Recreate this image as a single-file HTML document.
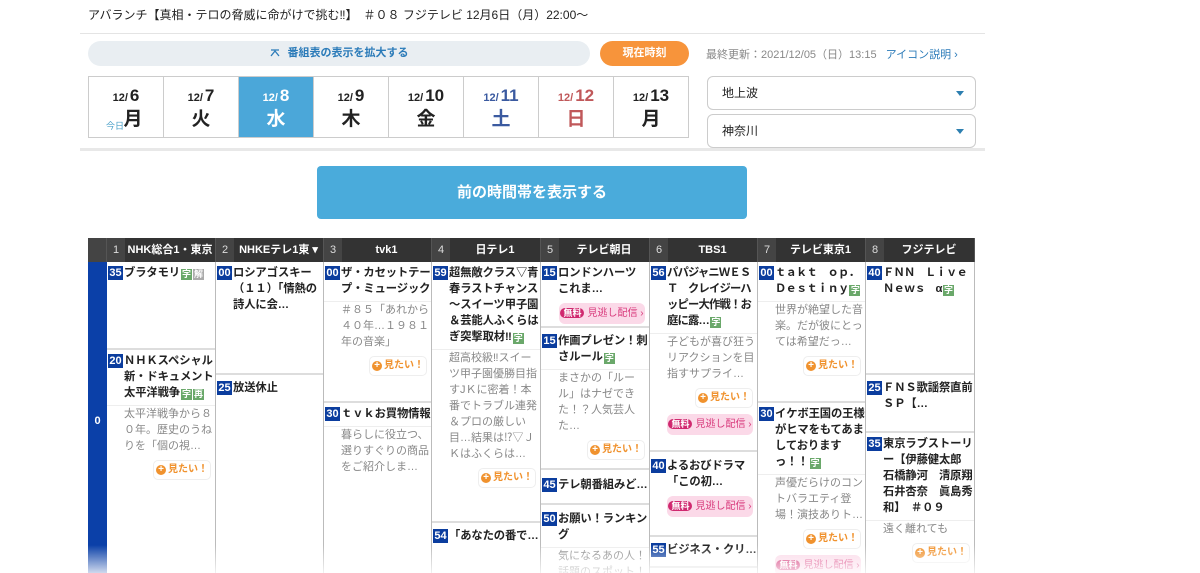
<!DOCTYPE html>
<html><head><meta charset="utf-8"><style>
*{box-sizing:border-box;margin:0;padding:0}
html,body{width:1200px;height:573px;overflow:hidden}
body{background:#fff;font-family:"Liberation Sans","Noto Sans CJK JP",sans-serif;color:#222;position:relative}
.a{position:absolute}
.title{left:88px;top:6px;font-size:12px;color:#222}
.hr1{left:80px;top:33px;width:905px;height:1px;background:#e4e4e4}
.pill{left:88px;top:41px;width:502px;height:25px;border-radius:13px;background:#e9eef2;color:#2b7bb9;font-size:11px;font-weight:bold;text-align:center;line-height:25px}
.pill svg{vertical-align:-1px;margin-right:8px}
.now{left:600px;top:41px;width:89px;height:25px;border-radius:13px;background:#f7943b;color:#fff;font-size:11px;font-weight:bold;text-align:center;line-height:25px}
.upd{left:706px;top:46px;font-size:11px;color:#888}
.upd b{font-weight:normal;color:#2b7bb9;margin-left:6px}
.tabs{left:88px;top:76px;width:601px;height:62px;border:1px solid #ccc;display:flex}
.tab{flex:1;border-right:1px solid #ccc;text-align:center;font-weight:bold;color:#222;position:relative}
.tab:last-child{border-right:none}
.tab .d{margin-top:9px;font-size:17px;line-height:20px}
.tab .d small{font-size:11px;margin-right:2px}
.tab .w{font-size:19px;line-height:24px}
.tab.sel{background:#4ba7d9;color:#fff}
.tab.sat{color:#3b5aa0}.tab.sun{color:#c0585a}
.today{position:absolute;left:17px;top:42px;font-size:9px;color:#4aa0c8;font-weight:normal}
.tab.first .w{padding-left:14px}
.sel2{left:707px;width:269px;height:34px;border:1px solid #ccc;border-radius:6px;font-size:12px;padding-left:14px;line-height:32px}
.sel2:after{content:"";position:absolute;right:11px;top:14px;border-left:4px solid transparent;border-right:4px solid transparent;border-top:5px solid #2d7fb0}
.hr2{left:80px;top:148px;width:905px;height:3px;background:#e8e8e8}
.prev{left:317px;top:166px;width:430px;height:53px;border-radius:4px;background:#4aabdb;color:#fff;font-size:15px;font-weight:bold;text-align:center;line-height:53px}
.hd{top:238px;height:24px;background:#333;color:#fff;font-size:11px;font-weight:bold;line-height:24px;text-align:center;border-right:1px solid #555;padding-left:18px;white-space:nowrap;overflow:hidden}
.hd .n{position:absolute;left:0;top:0;width:18px;height:24px;background:#444;font-weight:normal;color:#ddd}
.tc{left:88px;top:262px;width:19px;height:311px;background:#0b40a8;color:#fff;font-weight:bold;font-size:11px;text-align:center}
.col{top:262px;height:311px;border-right:1px solid #bbb;overflow:hidden}
.p{position:absolute;left:0;width:100%;border-bottom:2px solid #ddd;overflow:hidden;background:#fff}
.p.l{border-bottom:none}
.t{position:relative;padding-left:17px;padding-right:0;font-size:11.3px;font-weight:bold;line-height:16px;margin-top:3px;letter-spacing:-0.1px}
.t.w{letter-spacing:-0.8px}
.t i{position:absolute;left:1px;top:1px;width:15px;height:14px;background:#0b3d9e;color:#fff;font-style:normal;font-size:11px;line-height:14px;text-align:center;letter-spacing:0}
.t u{text-decoration:none;display:inline-block;width:11px;height:11px;background:#6aa86a;color:#fff;font-size:9px;line-height:11px;text-align:center;vertical-align:-1px;margin-left:1px}
.t u.g{background:#aaa}
.ds{padding-left:17px;padding-right:0;font-size:11px;color:#888;line-height:16px;margin-top:4px;border-top:1px solid #eee}
.mt{display:block;margin:6px 4px 0 auto;width:58px;height:20px;border:1px solid #eee;border-radius:5px;color:#f0922e;font-size:10px;font-weight:bold;line-height:18px;text-align:center}
.mt:before{content:"+";display:inline-block;width:10px;height:10px;border-radius:5px;background:#f0922e;color:#fff;font-size:10px;line-height:10px;margin-right:2px}
.mi{display:block;margin:6px 4px 0 auto;width:86px;height:21px;border-radius:6px;background:#fbd9e8;color:#d83a7c;font-size:10px;line-height:21px;text-align:center}
.mi b{background:#d0296f;color:#fff;border-radius:7px;padding:0 3px;font-size:9px;margin-right:3px}
.fade{left:0;top:545px;width:1200px;height:28px;background:linear-gradient(rgba(255,255,255,0),rgba(255,255,255,.8))}
</style></head><body>
<div class="a title">アバランチ【真相・テロの脅威に命がけで挑む‼】　＃０８ フジテレビ 12月6日（月）22:00～</div>
<div class="a hr1"></div>
<div class="a pill"><svg width="10" height="8" viewBox="0 0 10 8"><path d="M1 7L5 2L9 7M1 1H9" stroke="#2b7bb9" stroke-width="1.3" fill="none"/></svg>番組表の表示を拡大する</div>
<div class="a now">現在時刻</div>
<div class="a upd">最終更新：2021/12/05（日）13:15 <b>アイコン説明 ›</b></div>
<div class="a tabs">
<div class="tab first"><div class="d"><small>12/</small>6</div><div class="w">月</div><span class="today">今日</span></div>
<div class="tab"><div class="d"><small>12/</small>7</div><div class="w">火</div></div>
<div class="tab sel"><div class="d"><small>12/</small>8</div><div class="w">水</div></div>
<div class="tab"><div class="d"><small>12/</small>9</div><div class="w">木</div></div>
<div class="tab"><div class="d"><small>12/</small>10</div><div class="w">金</div></div>
<div class="tab sat"><div class="d"><small>12/</small>11</div><div class="w">土</div></div>
<div class="tab sun"><div class="d"><small>12/</small>12</div><div class="w">日</div></div>
<div class="tab"><div class="d"><small>12/</small>13</div><div class="w">月</div></div>
</div>
<div class="a sel2" style="top:76px">地上波</div>
<div class="a sel2" style="top:114px">神奈川</div>
<div class="a hr2"></div>
<div class="a prev">前の時間帯を表示する</div>

<div class="a hd" style="left:88px;width:19px;background:#444;padding:0"></div>
<div class="a hd" style="left:107px;width:109px"><span class="n">1</span>NHK総合1・東京</div>
<div class="a hd" style="left:216px;width:108px"><span class="n">2</span>NHKEテレ1東 ▾</div>
<div class="a hd" style="left:324px;width:108px"><span class="n">3</span>tvk1</div>
<div class="a hd" style="left:432px;width:109px"><span class="n">4</span>日テレ1</div>
<div class="a hd" style="left:541px;width:109px"><span class="n">5</span>テレビ朝日</div>
<div class="a hd" style="left:650px;width:108px"><span class="n">6</span>TBS1</div>
<div class="a hd" style="left:758px;width:108px"><span class="n">7</span>テレビ東京1</div>
<div class="a hd" style="left:866px;width:109px"><span class="n">8</span>フジテレビ</div>

<div class="a tc"><div style="margin-top:153px">0</div></div>

<div class="a col" style="left:107px;width:109px">
<div class="p" style="top:0;height:88px"><div class="t"><i>35</i>ブラタモリ<u>字</u><u class="g">解</u></div></div>
<div class="p l" style="top:88px;height:223px"><div class="t"><i>20</i>ＮＨＫスペシャル　新・ドキュメント　太平洋戦争<u>字</u><u>再</u></div><div class="ds">太平洋戦争から８０年。歴史のうねりを「個の視…</div><span class="mt">見たい！</span></div>
</div>
<div class="a col" style="left:216px;width:108px">
<div class="p" style="top:0;height:113px"><div class="t"><i>00</i>ロシアゴスキー　（１１）「情熱の詩人に会…</div></div>
<div class="p l" style="top:113px;height:198px"><div class="t" style="margin-top:5px"><i>25</i>放送休止</div></div>
</div>
<div class="a col" style="left:324px;width:108px">
<div class="p" style="top:0;height:141px"><div class="t"><i>00</i>ザ・カセットテープ・ミュージック</div><div class="ds">＃８５「あれから４０年…１９８１年の音楽」</div><span class="mt">見たい！</span></div>
<div class="p l" style="top:141px;height:170px"><div class="t" style="margin-top:3px"><i>30</i>ｔｖｋお買物情報</div><div class="ds">暮らしに役立つ、選りすぐりの商品をご紹介しま…</div></div>
</div>
<div class="a col" style="left:432px;width:109px">
<div class="p" style="top:0;height:261px"><div class="t"><i>59</i>超無敵クラス▽青春ラストチャンス～スイーツ甲子園＆芸能人ふくらはぎ突撃取材‼<u>字</u></div><div class="ds">超高校級‼スイーツ甲子園優勝目指すJＫに密着！本番でトラブル連発＆プロの厳しい目…結果は⁉▽ＪＫはふくらは…</div><span class="mt">見たい！</span></div>
<div class="p l" style="top:261px;height:50px"><div class="t" style="margin-top:5px"><i>54</i>「あなたの番で…</div></div>
</div>
<div class="a col" style="left:541px;width:109px">
<div class="p" style="top:0;height:66px"><div class="t"><i>15</i>ロンドンハーツ　これま…</div><span class="mi"><b>無料</b>見逃し配信 ›</span></div>
<div class="p" style="top:66px;height:142px"><div class="t" style="margin-top:5px"><i>15</i>作画プレゼン！刺さルール<u>字</u></div><div class="ds">まさかの「ルール」はナゼできた！？人気芸人た…</div><span class="mt">見たい！</span></div>
<div class="p" style="top:208px;height:35px"><div class="t" style="margin-top:7px"><i>45</i>テレ朝番組みど…</div></div>
<div class="p l" style="top:243px;height:68px"><div class="t" style="margin-top:6px"><i>50</i>お願い！ランキング</div><div class="ds">気になるあの人！話題のスポット！</div></div>
</div>
<div class="a col" style="left:650px;width:108px">
<div class="p" style="top:0;height:190px"><div class="t w"><i>56</i>パパジャニＷＥＳＴ　クレイジーハッピー大作戦！お庭に露…<u>字</u></div><div class="ds">子どもが喜び狂うリアクションを目指すサプライ…</div><span class="mt">見たい！</span><span class="mi"><b>無料</b>見逃し配信 ›</span></div>
<div class="p" style="top:190px;height:85px"><div class="t" style="margin-top:6px"><i>40</i>よるおびドラマ「この初…</div><span class="mi"><b>無料</b>見逃し配信 ›</span></div>
<div class="p" style="top:275px;height:31px"><div class="t" style="margin-top:5px"><i>55</i>ビジネス・クリ…</div></div>
</div>
<div class="a col" style="left:758px;width:108px">
<div class="p" style="top:0;height:141px"><div class="t w"><i>00</i>ｔａｋｔ　ｏｐ．Ｄｅｓｔｉｎｙ<u>字</u></div><div class="ds">世界が絶望した音楽。だが彼にとっては希望だっ…</div><span class="mt">見たい！</span></div>
<div class="p l" style="top:141px;height:170px"><div class="t" style="margin-top:3px"><i>30</i>イケボ王国の王様がヒマをもてあましております っ！！<u>字</u></div><div class="ds">声優だらけのコントバラエティ登場！演技ありト…</div><span class="mt">見たい！</span><span class="mi"><b>無料</b>見逃し配信 ›</span></div>
</div>
<div class="a col" style="left:866px;width:109px">
<div class="p" style="top:0;height:113px"><div class="t w"><i>40</i>ＦＮＮ　Ｌｉｖｅ　Ｎｅｗｓ　α<u>字</u></div></div>
<div class="p" style="top:113px;height:58px"><div class="t" style="margin-top:5px"><i>25</i>ＦＮＳ歌謡祭直前ＳＰ【…</div></div>
<div class="p l" style="top:171px;height:140px"><div class="t"><i>35</i>東京ラブストーリー【伊藤健太郎　石橋静河　清原翔　石井杏奈　眞島秀和】　＃０９</div><div class="ds">遠く離れても</div><span class="mt">見たい！</span></div>
</div>
<div class="a fade"></div>
</body></html>
